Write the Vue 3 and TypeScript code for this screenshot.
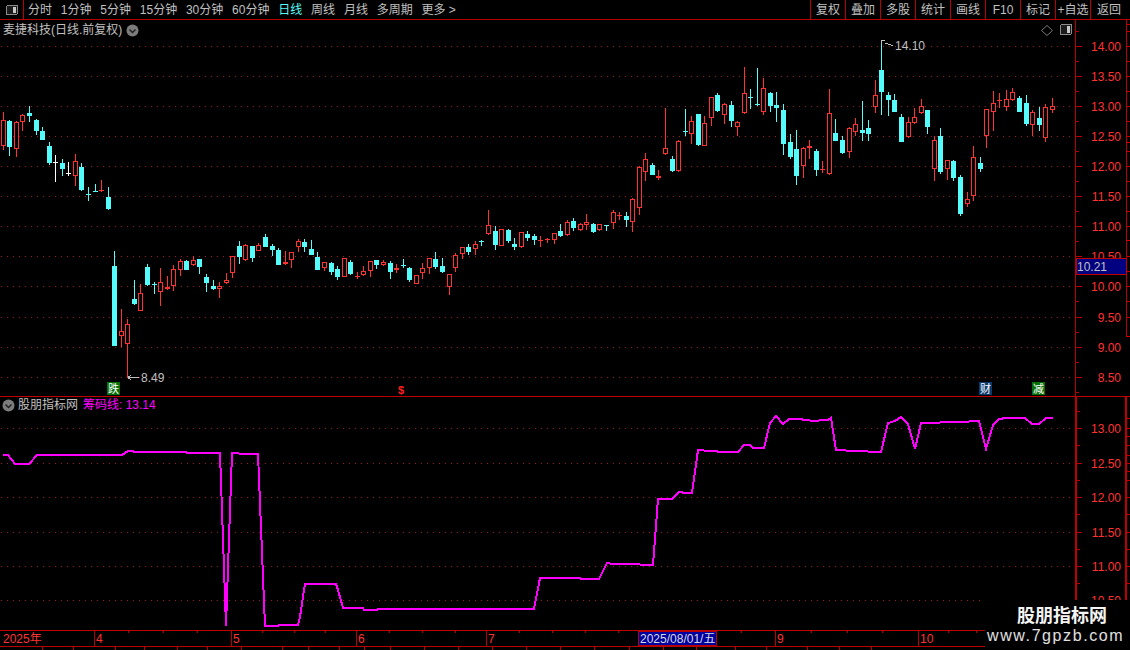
<script setup lang="ts">
type Kind = 'r' | 'c' | 'w'
type Row = [number, number, number, number, Kind]

const leftTabs = ['分时', '1分钟', '5分钟', '15分钟', '30分钟', '60分钟', '日线', '周线', '月线', '多周期', '更多 >']
const rightTabs = ['复权', '叠加', '多股', '统计', '画线', 'F10', '标记', '+自选', '返回']

const groups: { y0: number; rows: Row[] }[] = [
  { y0: 100, rows: [
    [37,60,140,152,'r'],[60,63,143,170,'c'],[65,67,149,173,'r'],[42,45,68,93,'r'],[20,39,48,68,'c'],
    [57,60,93,107,'c'],[82,93,120,122,'c'],[126,138,189,195,'c'],[165,188,191,248,'w'],[178,189,207,228,'c'],
    [186,220,223,228,'w'],[162,184,230,260,'r'],[190,201,270,273,'c'],[262,283,286,305,'c'],[252,274,277,277,'c'],
    [240,270,275,278,'r'],[262,291,327,332,'c'],[453,498,738,738,'c'],[628,694,710,742,'r'],[658,673,734,835,'r'],
    [540,597,612,615,'c'],[552,580,635,635,'r'],[492,501,555,560,'c'],[546,552,557,582,'c'],[504,547,578,620,'r'],
    [530,561,569,570,'r'],[495,508,560,575,'r'],[478,484,512,530,'r'],[480,484,510,512,'c'],[470,481,497,500,'r'],
    [477,477,503,522,'c'],[522,531,549,576,'c'],[540,558,567,572,'c'],[548,559,569,594,'r'],[520,541,551,553,'r'],
    [468,469,521,536,'r'],[423,438,471,492,'c'],[432,436,482,483,'r'],[438,438,474,486,'c'],[430,436,455,455,'r'],
    [402,411,441,443,'c'],[432,438,450,470,'c'],[444,450,495,497,'c'],
  ] },
  { y0: 190, rows: [
    [183,217,224,225,'r'],[186,187,212,234,'r'],[148,154,173,188,'r'],[148,156,171,186,'c'],[150,178,195,197,'c'],
    [186,201,240,240,'c'],[217,217,236,245,'r'],[216,220,248,257,'c'],[228,238,261,270,'c'],[205,205,261,261,'r'],
    [212,217,252,256,'c'],[246,258,263,267,'r'],[228,245,255,258,'r'],[213,214,245,261,'r'],[210,210,225,237,'c'],
    [212,217,227,230,'r'],[214,220,248,267,'c'],[223,235,242,249,'r'],[207,226,229,234,'c'],[232,235,270,278,'c'],
    [256,256,282,282,'r'],[220,235,251,267,'r'],[204,205,236,252,'r'],[186,208,231,237,'c'],[205,228,246,249,'c'],
    [252,253,293,315,'r'],[190,196,236,246,'r'],[172,172,194,207,'r'],[162,171,186,195,'c'],[153,163,179,195,'r'],
    [150,153,156,168,'c'],[60,106,134,135,'r'],[108,123,167,180,'c'],[117,118,170,170,'r'],[118,120,153,159,'c'],
    [144,162,171,180,'c'],[126,127,173,176,'r'],[123,132,144,153,'c'],[132,138,150,165,'c'],[138,150,155,171,'r'],
    [144,147,152,160,'r'],[129,130,152,162,'r'],[102,123,138,141,'c'],[90,97,137,140,'r'],[84,93,114,123,'c'],
    [99,102,120,125,'r'],[72,97,105,120,'r'],[99,102,126,129,'c'],[102,103,122,123,'r'],[105,105,108,123,'c'],
    [60,67,101,117,'r'],[66,75,80,90,'r'],[66,78,90,111,'c'],[24,28,98,126,'r'],
  ] },
  { y0: 60, rows: [
    [318,322,445,465,'r'],[280,298,338,365,'r'],[309,316,345,345,'c'],[330,349,356,362,'r'],[145,265,284,285,'r'],
    [288,297,333,336,'c'],[240,244,335,338,'r'],[148,213,218,228,'c'],[168,184,224,252,'r'],[162,162,255,258,'c'],
    [170,190,260,260,'r'],[112,112,176,200,'r'],[99,105,153,156,'c'],[130,133,167,192,'r'],[123,135,183,201,'c'],
    [184,187,203,228,'r'],[21,100,160,163,'r'],[87,111,114,147,'c'],[24,132,137,138,'c'],[54,85,158,165,'r'],
    [96,99,138,156,'c'],[96,135,144,186,'c'],[132,150,252,285,'c'],[222,246,291,297,'c'],[210,267,348,375,'c'],
    [262,265,320,354,'r'],[240,259,266,297,'r'],[267,273,330,348,'c'],[303,327,332,339,'r'],[87,160,342,345,'r'],
    [177,219,243,243,'c'],[228,240,279,282,'c'],[202,205,278,294,'r'],[174,193,216,228,'r'],[123,210,219,243,'c'],
    [180,204,222,243,'c'],[60,106,143,159,'r'],
  ] },
  { y0: 80, rows: [
    [-120,-30,36,105,'c'],[36,45,60,110,'c'],[42,60,96,96,'c'],[102,111,186,186,'c'],[111,126,173,174,'r'],
    [84,111,131,132,'r'],[57,78,100,102,'r'],[90,90,141,162,'c'],[170,180,269,303,'r'],[144,168,276,282,'c'],
    [240,241,269,300,'r'],[240,243,294,303,'c'],[285,291,402,408,'c'],[337,358,372,381,'r'],[198,232,350,363,'r'],
    [231,249,267,276,'c'],[87,88,170,204,'r'],[33,70,98,153,'r'],[39,60,65,84,'r'],[30,58,83,93,'r'],
    [24,37,62,63,'r'],[48,54,96,96,'c'],[45,69,132,138,'c'],[90,96,135,168,'r'],[81,114,135,153,'c'],
    [72,81,174,186,'r'],[54,79,90,99,'r'],
  ] },
]

interface Candle { x: number; hi: number; top: number; bot: number; lo: number; kind: Kind }
const candles: Candle[] = []
for (const g of groups) {
  for (const r of g.rows) {
    const i = candles.length
    const py = (z: number) => Math.floor(g.y0 + z / 3)
    candles.push({ x: Math.floor(3.3 + i * 6.556), hi: py(r[0]), top: py(r[1]), bot: py(r[2]), lo: py(r[3]), kind: r[4] })
  }
}

const colorOf: Record<Kind, string> = { r: '#ff3232', c: '#54fcfc', w: '#ffffff' }

const mainGrid = [
  { y: 46, t: '14.00' }, { y: 76, t: '13.50' }, { y: 106, t: '13.00' }, { y: 136, t: '12.50' },
  { y: 166, t: '12.00' }, { y: 196, t: '11.50' }, { y: 226, t: '11.00' }, { y: 256, t: '10.50' },
  { y: 286, t: '10.00' }, { y: 317, t: '9.50' }, { y: 347, t: '9.00' }, { y: 377, t: '8.50' },
]
const mainMinor = [31, 61, 91, 121, 151, 181, 211, 241, 271, 301, 332, 362, 392]
const mainEdge = [24, 31, 46, 61, 76, 91, 106, 121, 136, 151, 166, 181, 196, 211, 226, 256, 271, 286, 301, 317]
const mainEdgeLong = [142, 240, 336]

const subGrid = [
  { y: 428, t: '13.00' }, { y: 463, t: '12.50' }, { y: 497, t: '12.00' },
  { y: 532, t: '11.50' }, { y: 566, t: '11.00' }, { y: 600, t: '10.50' },
]
const subMinor = [411, 445, 480, 514, 549, 583, 617]
const subEdge = [418, 428, 436, 445, 455, 463, 471, 480, 497, 514, 532, 549, 566, 583, 600, 617]

const line: [number, number][] = [
  [3,455],[8,455],[15,464],[29,464],[37,455],[122,455],[128,451],[133,451],[134,452],[186,452],[187,453],[220,453],
  [226,626],[232,453],[238,453],[240,454],[258,454],[265,626],[278,626],[279,625],[298,625],[300,617],[304,590],[305,584],
  [336,584],[338,590],[343,608],[363,608],[364,610],[377,610],[378,609],[534,609],[540,578],[580,578],[581,579],[599,579],
  [607,563],[613,564],[639,564],[641,565],[653,565],[658,499],[672,499],[679,492],[686,493],[692,493],[698,450],[703,450],
  [705,451],[717,451],[718,452],[738,452],[744,445],[750,445],[753,448],[764,448],[770,423],[776,416],[783,424],[789,419],
  [802,419],[803,420],[809,420],[811,421],[828,420],[831,418],[836,450],[855,451],[881,452],[888,423],[895,421],[901,417],
  [908,424],[915,449],[921,423],[960,422],[979,421],[986,449],[993,425],[999,419],[1006,418],[1025,418],[1032,424],
  [1039,424],[1046,418],[1053,418],
]
const linePoints = line.map((p) => p.join(',')).join(' ')

const months = [{ x: 94, t: '4' }, { x: 231, t: '5' }, { x: 356, t: '6' }, { x: 486, t: '7' }, { x: 775, t: '9' }, { x: 918, t: '10' }]
const xTicks = [128, 163, 197, 262, 294, 325, 389, 422, 455, 519, 552, 585, 618, 741, 811, 847, 882, 948, 976]
const tabStops = [42, 73, 115, 144, 177, 207, 241, 282, 308, 339, 364, 390, 424, 458, 492, 526, 560, 594, 629, 663, 696, 735, 766, 807, 839, 871]
</script>

<template>
  <div class="root">
    <header class="toolbar">
      <div class="panel-toggle">
        <svg width="12" height="10" viewBox="0 0 12 10">
          <rect class="crisp" x="0.5" y="0.5" width="11" height="9" rx="1.5" fill="#1c1c1c" stroke="#8c8c8c" />
          <rect class="crisp" x="7" y="2" width="3" height="6" fill="#c8c8c8" />
        </svg>
      </div>
      <nav class="periods">
        <span v-for="t in leftTabs" :key="t" :class="{ active: t === '日线' }">{{ t }}</span>
      </nav>
      <nav class="actions">
        <span v-for="t in rightTabs" :key="t" class="action">{{ t }}</span>
      </nav>
    </header>

    <section class="pane main-pane">
      <div class="pane-title">
        <span>麦捷科技(日线.前复权)</span>
        <svg class="chevron" width="13" height="13" viewBox="0 0 13 13">
          <circle cx="6.5" cy="6.5" r="6" fill="#7c7c7c" />
          <path d="M3.5 5.5 L6.5 8.5 L9.5 5.5" fill="none" stroke="#1e1e1e" stroke-width="1.4" />
        </svg>
      </div>
      <svg class="chart" width="1130" height="376" viewBox="0 20 1130 376">
        <line v-for="g in mainGrid" :key="g.y" class="grid" x1="1" x2="1075" :y1="g.y + 0.5" :y2="g.y + 0.5" />
        <g v-for="(c, i) in candles" :key="i" class="crisp">
          <rect :x="c.x" :y="c.hi" width="1" :height="Math.max(c.top - c.hi, 0)" :fill="colorOf[c.kind]" />
          <rect :x="c.x" :y="c.bot" width="1" :height="Math.max(c.lo - c.bot, 0)" :fill="colorOf[c.kind]" />
          <rect v-if="c.kind === 'r' && c.bot - c.top > 2" :x="c.x - 2 + 0.5" :y="c.top + 0.5" width="4" :height="c.bot - c.top - 1" fill="#000" stroke="#ff3232" />
          <rect v-else :x="c.x - 2" :y="c.top" width="5" :height="Math.max(c.bot - c.top, 1)" :fill="colorOf[c.kind]" />
        </g>

        <path class="crisp" d="M881 40 V44 M881 40.5 H885 M885 43 L893 45.5" fill="none" stroke="#c0c0c0" />
        <text class="num note" x="895" y="50">14.10</text>
        <path class="crisp" d="M128 377.5 H139 M128 377.5 L131 375 M128 377.5 L131 380" fill="none" stroke="#c0c0c0" />
        <text class="num note" x="141" y="382">8.49</text>

        <rect class="crisp" x="107" y="382" width="13" height="13" fill="#067006" />
        <text class="badge" x="113.5" y="393">跌</text>
        <text class="dollar" x="401" y="394">$</text>
        <rect class="crisp" x="979" y="382" width="13" height="13" fill="#0b3a6e" />
        <text class="badge" x="985.5" y="393">财</text>
        <rect class="crisp" x="1032" y="382" width="13" height="13" fill="#067006" />
        <text class="badge" x="1038.5" y="393">减</text>

        <path d="M1047 25.5 L1052.5 30.5 L1047 35.5 L1041.5 30.5 Z" fill="none" stroke="#777" />
        <rect class="crisp" x="1060.5" y="24.5" width="11" height="10" rx="1.5" fill="#1c1c1c" stroke="#8c8c8c" />
        <rect class="crisp" x="1067" y="26" width="3" height="7" fill="#c8c8c8" />

        <rect class="crisp" x="1075" y="20" width="1" height="376" fill="#b80000" />
        <rect class="crisp" x="1126" y="20" width="1" height="316" fill="#b80000" />
        <g class="crisp">
          <rect v-for="g in mainGrid" :key="g.y" x="1076" :y="g.y" width="6" height="1" fill="#b80000" />
          <rect v-for="y in mainMinor" :key="y" x="1076" :y="y" width="3" height="1" fill="#b80000" />
          <rect v-for="y in mainEdge" :key="y" x="1127" :y="y" width="3" height="1" fill="#b80000" />
          <rect v-for="y in mainEdgeLong" :key="y" x="1126" :y="y" width="4" height="1" fill="#d00000" />
        </g>
        <text v-for="g in mainGrid" :key="g.t" class="num axis-label" x="1121" :y="g.y + 5">{{ g.t }}</text>

        <rect class="crisp" x="1076.5" y="258.5" width="50" height="16" fill="#000080" stroke="#c00000" />
        <text class="num note" x="1077" y="271">10.21</text>
      </svg>
    </section>

    <section class="pane sub-pane">
      <div class="pane-title sub-title">
        <svg class="chevron" width="13" height="13" viewBox="0 0 13 13">
          <circle cx="6.5" cy="6.5" r="6" fill="#7c7c7c" />
          <path d="M3.5 5.5 L6.5 8.5 L9.5 5.5" fill="none" stroke="#1e1e1e" stroke-width="1.4" />
        </svg>
        <span>股朋指标网</span>
        <span class="magenta">筹码线: <i>13.14</i></span>
      </div>
      <svg class="chart" width="1130" height="233" viewBox="0 397 1130 233">
        <line v-for="g in subGrid" :key="g.y" class="grid" x1="1" x2="1075" :y1="g.y + 0.5" :y2="g.y + 0.5" />
        <polyline class="crisp" :points="linePoints" fill="none" stroke="#ff00ff" stroke-width="2" />
        <rect class="crisp" x="1075" y="397" width="2" height="233" fill="#c00000" />
        <rect class="crisp" x="1125" y="397" width="2" height="233" fill="#c00000" />
        <g class="crisp">
          <rect v-for="g in subGrid" :key="g.y" x="1077" :y="g.y" width="5" height="1" fill="#b80000" />
          <rect v-for="y in subMinor" :key="y" x="1077" :y="y" width="3" height="1" fill="#b80000" />
          <rect v-for="y in subEdge" :key="y" x="1127" :y="y" width="3" height="1" fill="#b80000" />
        </g>
        <text v-for="g in subGrid" :key="g.t" class="num axis-label" x="1121" :y="g.y + 5">{{ g.t }}</text>
      </svg>
    </section>

    <footer class="time-axis">
      <svg width="1130" height="15" viewBox="0 631 1130 15">
        <text class="axis-cn" x="3" y="643">2025年</text>
        <g class="crisp">
          <rect v-for="x in xTicks" :key="x" :x="x" y="631" width="1" height="2" fill="#b80000" />
          <rect v-for="m in months" :key="m.t" :x="m.x" y="631" width="1" height="15" fill="#b80000" />
        </g>
        <text v-for="m in months" :key="m.t + 't'" class="num month-label" :x="m.x + 2" y="643">{{ m.t }}</text>
        <rect class="crisp" x="638.5" y="631.5" width="78" height="14" fill="#0000a0" stroke="#b80000" />
        <text class="date-label" x="640" y="643">2025/08/01/五</text>
      </svg>
    </footer>

    <div class="bottom-tabs">
      <svg width="1130" height="3" viewBox="0 647 1130 3">
        <rect v-for="x in tabStops" :key="x" class="crisp" :x="x" y="647" width="1" height="3" fill="#b80000" />
      </svg>
    </div>

    <aside class="watermark">
      <strong>股朋指标网</strong>
      <span>www.7gpzb.com</span>
    </aside>
  </div>
</template>

<style>
html, body { margin: 0; background: #000; }
</style>

<style scoped>
.root {
  position: relative;
  width: 1130px;
  height: 650px;
  overflow: hidden;
  background: #000;
  color: #c0c0c0;
  font: 12px "Liberation Sans", "Noto Sans CJK SC", sans-serif;
  display: flex;
  flex-direction: column;
}
.toolbar {
  height: 19px;
  border-bottom: 1px solid #b80000;
  display: flex;
  align-items: flex-start;
  line-height: 20px;
  flex: none;
}
.panel-toggle {
  width: 23px;
  height: 19px;
  border-right: 1px solid #b80000;
  display: flex;
  align-items: center;
  justify-content: center;
}
.periods {
  display: flex;
  gap: 8.8px;
  padding-left: 4px;
  white-space: nowrap;
}
.active { color: #54fcfc; }
.actions {
  margin-left: auto;
  display: flex;
  height: 19px;
}
.action {
  width: 34px;
  border-left: 1px solid #b80000;
  text-align: center;
  white-space: nowrap;
}
.action:last-child {
  width: 40px;
  padding-right: 3px;
  box-sizing: border-box;
}
.pane {
  position: relative;
  flex: none;
}
.main-pane {
  height: 376px;
  border-bottom: 1px solid #c00000;
}
.sub-pane {
  height: 233px;
  border-bottom: 1px solid #c00000;
}
.chart { display: block; }
.pane-title {
  position: absolute;
  left: 3px;
  top: 2px;
  height: 16px;
  line-height: 16px;
  display: flex;
  align-items: center;
  gap: 4px;
  white-space: nowrap;
  z-index: 1;
}
.sub-title {
  left: 2px;
  top: 0;
  gap: 3px;
}
.chevron { flex: none; }
.magenta {
  color: #ff00ff;
  margin-left: 2px;
}
.magenta i { font-style: normal; }
.crisp { shape-rendering: crispEdges; }
.grid {
  stroke: #a01818;
  stroke-width: 1;
  stroke-dasharray: 1 5;
  shape-rendering: crispEdges;
}
.num { font: 12px "Liberation Sans", sans-serif; }
.note { fill: #c0c0c0; }
.axis-label {
  fill: #ff3232;
  text-anchor: end;
}
.month-label { fill: #ff3232; }
.axis-cn {
  font: 12px "Liberation Sans", "Noto Sans CJK SC", sans-serif;
  fill: #ff3232;
}
.date-label {
  font: 12px "Liberation Sans", "Noto Sans CJK SC", sans-serif;
  fill: #d8d8d8;
}
.badge {
  font: 11px "Noto Sans CJK SC", sans-serif;
  fill: #fff;
  text-anchor: middle;
}
.dollar {
  font: bold 11px "Liberation Sans", sans-serif;
  fill: #ff2020;
  text-anchor: middle;
}
.time-axis {
  height: 15px;
  border-bottom: 1px solid #b80000;
  flex: none;
}
.time-axis svg, .bottom-tabs svg { display: block; }
.bottom-tabs {
  height: 3px;
  flex: none;
}
.watermark {
  position: absolute;
  left: 985px;
  top: 600px;
  width: 145px;
  height: 50px;
  background: #000;
  color: #e0e0e0;
  display: flex;
  flex-direction: column;
  align-items: flex-start;
  white-space: nowrap;
}
.watermark strong {
  font: bold 18px/24px "Noto Sans CJK SC", sans-serif;
  margin: 2px 0 0 32px;
  color: #f4f4f4;
}
.watermark span {
  font: 16px/20px "Liberation Sans", sans-serif;
  letter-spacing: 1.6px;
  margin-left: 2px;
}
</style>
